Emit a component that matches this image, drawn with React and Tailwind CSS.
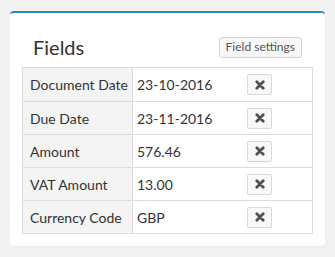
import React from 'react';

const fields = [
    { label: 'Document Date', value: '23-10-2016' },
    { label: 'Due Date', value: '23-11-2016' },
    { label: 'Amount', value: '576.46' },
    { label: 'VAT Amount', value: '13.00' },
    { label: 'Currency Code', value: 'GBP' },
];

function RemoveIcon() {
    return (
        <svg width="10" height="10" viewBox="0 0 10 10">
            <path d="M1.8 1.8 L8.2 8.2 M8.2 1.8 L1.8 8.2" stroke="#505050" strokeWidth="2.8" strokeLinecap="round" />
        </svg>
    );
}

export default function App() {
    return (
        <div className="w-[335px] h-[257px] bg-[#f2f2f2] pt-[11px] px-[10px] font-['Lato',sans-serif] text-[#333]">
            <div className="w-[315px] h-[235px] bg-white rounded-t-[4px] rounded-b-[3px] border-t-2 border-[#2a8ab8] shadow-[0_1px_1px_rgba(0,0,0,0.04)]">
                {/* Header */}
                <div className="flex items-center justify-between pl-[23px] pr-[23px] pt-[14px] h-[54px]">
                    <h3 className="text-[20px] leading-none text-[#333]">Fields</h3>
                    <button className="h-[21px] px-[6px] text-[12px] leading-none text-[#555] bg-[#f7f7f7] border border-[#d4d4d4] rounded-[3px]">
                        Field settings
                    </button>
                </div>

                {/* Table */}
                <div className="mx-[12px] border border-[#dcdcdc]">
                    {fields.map((f, i) => (
                        <div
                            key={f.label}
                            className={`grid grid-cols-[110px_107px_1fr] h-[33px] text-[14px] ${i > 0 ? 'border-t border-[#dcdcdc]' : ''}`}
                        >
                            <div className="bg-[#f4f4f4] border-r border-[#dcdcdc] flex items-center px-[7px] whitespace-nowrap">{f.label}</div>
                            <div className="flex items-center px-[4px]">{f.value}</div>
                            <div className="flex items-center pl-[7px]">
                                <button className="w-[25px] h-[21px] flex items-center justify-center bg-[#f8f8f8] border border-[#d9d9d9] rounded-[2px]">
                                    <RemoveIcon />
                                </button>
                            </div>
                        </div>
                    ))}
                </div>
            </div>
        </div>
    );
}
